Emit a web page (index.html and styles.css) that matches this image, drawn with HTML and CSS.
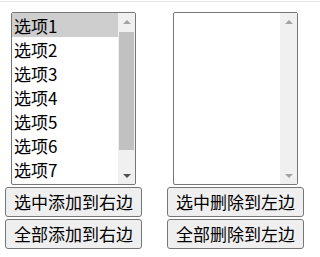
FILE: index.html
```html
<!DOCTYPE html>
<html lang="zh-CN">
<head>
<meta charset="utf-8">
<title>选项移动</title>
<link rel="stylesheet" href="styles.css">
</head>
<body>
<div class="topline"></div>
<div class="row">
  <div class="pane">
    <div class="listbox" role="listbox" aria-multiselectable="true">
      <div class="options">
        <div class="option selected" role="option" aria-selected="true">选项1</div>
        <div class="option" role="option">选项2</div>
        <div class="option" role="option">选项3</div>
        <div class="option" role="option">选项4</div>
        <div class="option" role="option">选项5</div>
        <div class="option" role="option">选项6</div>
        <div class="option" role="option">选项7</div>
      </div>
      <div class="scrollbar">
        <div class="sb-btn"><span class="arrow up dim"></span></div>
        <div class="sb-track"><div class="sb-thumb"></div></div>
        <div class="sb-btn"><span class="arrow down"></span></div>
      </div>
    </div>
    <button class="btn" type="button">选中添加到右边</button>
    <button class="btn" type="button">全部添加到右边</button>
  </div>
  <div class="pane">
    <div class="listbox" role="listbox" aria-multiselectable="true">
      <div class="options"></div>
      <div class="scrollbar">
        <div class="sb-btn"><span class="arrow up dim"></span></div>
        <div class="sb-track"></div>
        <div class="sb-btn"><span class="arrow down dim"></span></div>
      </div>
    </div>
    <button class="btn" type="button">选中删除到左边</button>
    <button class="btn" type="button">全部删除到左边</button>
  </div>
</div>
</body>
</html>
```

FILE: styles.css
```css
html, body {
  margin: 0;
  padding: 0;
  background: #fff;
}

body {
  font-family: "Noto Sans CJK SC", "Noto Sans", sans-serif;
  color: #000;
}

.topline {
  margin-top: 1px;
  height: 1px;
  background: #e5e5e5;
}

.row {
  display: flex;
  gap: 25px;
  padding-left: 5px;
  margin-top: 10px;
  align-items: flex-start;
}

.pane {
  display: flex;
  flex-direction: column;
  align-items: center;
  gap: 2px;
}

.listbox {
  box-sizing: border-box;
  display: flex;
  width: 125px;
  height: 173px;
  border: 1px solid #767676;
  border-radius: 2px;
  background: #fff;
  overflow: hidden;
}

.options {
  flex: 1;
  overflow: hidden;
  font-size: 17px;
}

.option {
  height: 24px;
  line-height: 25px;
  padding: 0 2px;
  white-space: nowrap;
}

.option.selected {
  background: #cecece;
}

.scrollbar {
  width: 17px;
  display: flex;
  flex-direction: column;
  background: #f0f0f0;
}

.sb-btn {
  height: 17px;
  display: flex;
  align-items: center;
  justify-content: center;
  flex: none;
}

.sb-track {
  flex: 1;
  display: flex;
  flex-direction: column;
  padding: 2px 1px 0;
}

.sb-thumb {
  height: 118px;
  background: #c1c1c1;
}

.arrow {
  width: 0;
  height: 0;
  border-left: 4px solid transparent;
  border-right: 4px solid transparent;
}

.arrow.up {
  border-bottom: 4px solid #505050;
}

.arrow.down {
  border-top: 4px solid #505050;
}

.arrow.up.dim {
  border-bottom-color: #a3a3a3;
}

.arrow.down.dim {
  border-top-color: #a3a3a3;
}

.btn {
  box-sizing: border-box;
  height: 30px;
  margin: 0;
  padding: 0 8px;
  border: 1px solid #767676;
  border-radius: 3px;
  background: #efefef;
  font-family: "Noto Sans CJK SC", "Noto Sans", sans-serif;
  font-size: 17px;
  line-height: 24px;
  color: #000;
}
```
